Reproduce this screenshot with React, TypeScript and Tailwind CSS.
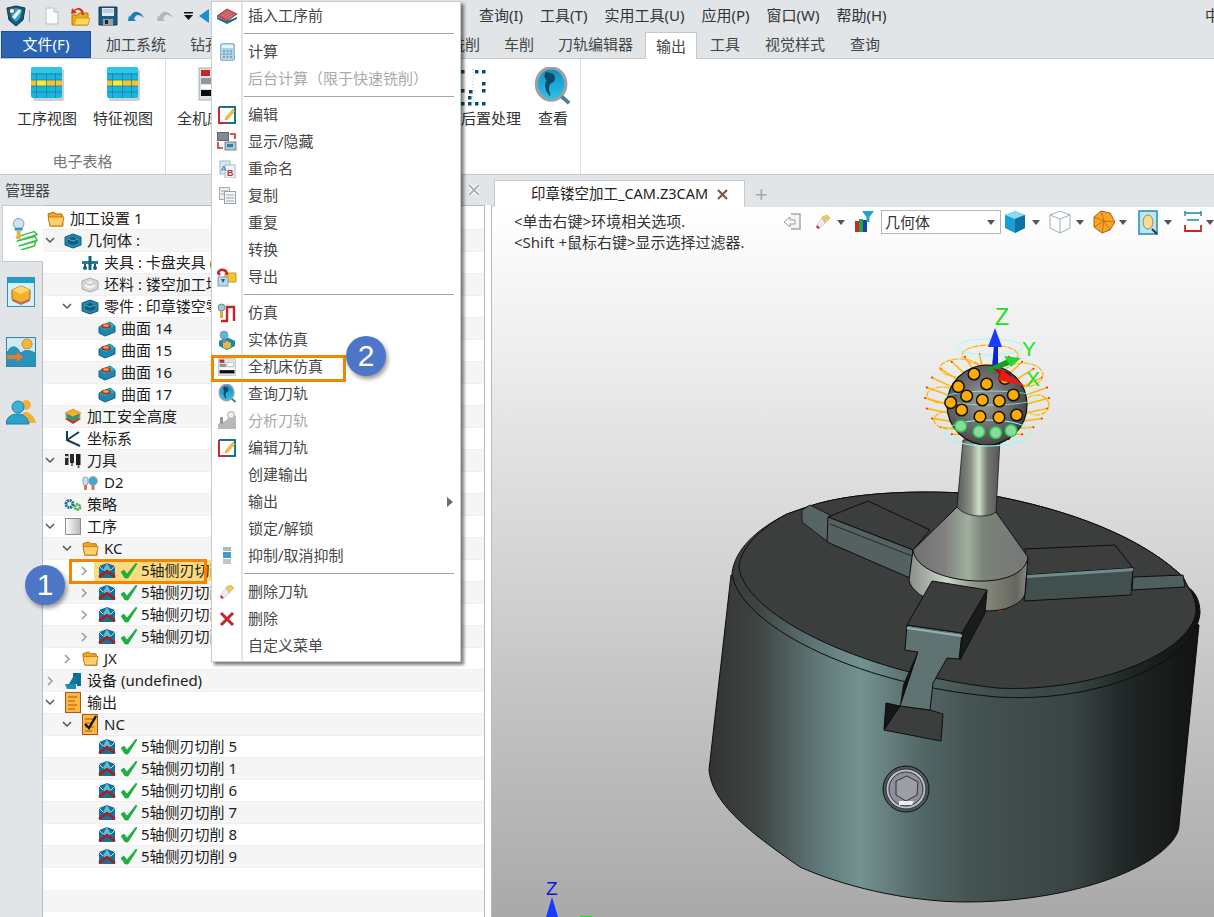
import React from 'react'

type IconProps = { className?: string }

const Logo = () => (
  <svg width="20" height="22" viewBox="0 0 20 22">
    <path d="M1 3 L10 1 L19 3 L17 15 L10 21 L3 15 Z" fill="#0d5f7d" stroke="#16313f" />
    <path d="M4 5 L10 3 L16 5 L14 13 L10 17 L6 13 Z" fill="#38a6c7" />
    <path d="M6 12 L13 4 L15 6 L9 14 Z" fill="#f4f6f7" />
    <circle cx="6" cy="6" r="2.5" fill="#fff" stroke="#555" />
  </svg>
)
const NewDoc = () => (
  <svg width="16" height="18" viewBox="0 0 16 18">
    <path d="M2 1 H10 L14 5 V17 H2 Z" fill="#fbfbfb" stroke="#b9bec2" />
    <path d="M10 1 V5 H14" fill="#e3e6e8" stroke="#b9bec2" />
  </svg>
)
const OpenFolder = () => (
  <svg width="20" height="20" viewBox="0 0 20 20">
    <path d="M2 9 H8 L9 7 H18 V19 H2 Z" fill="#f0a90e" stroke="#bb7a05" />
    <path d="M4 19 L6 12 H20 L18 19 Z" fill="#ffd75a" stroke="#d59c10" />
    <path d="M12 9 C11 3 7 3 5 5 L7 7 L1 8 L2 2 L4 4 C8 0 14 2 14 9 Z" fill="#dd2e1c" />
  </svg>
)
const Save = () => (
  <svg width="20" height="20" viewBox="0 0 20 20">
    <path d="M1 1 H19 V19 H1 Z" fill="#1d5c83" stroke="#12384f" />
    <rect x="4" y="2" width="12" height="8" fill="#dfe9ef" />
    <path d="M5 4 H15 M5 6 H15" stroke="#8fb0c4" />
    <rect x="5" y="13" width="10" height="6" fill="#9a9fa3" />
    <rect x="7" y="14" width="3" height="4" fill="#222" />
  </svg>
)
const Undo = ({ c }: { c: string }) => (
  <svg width="18" height="12" viewBox="0 0 18 12">
    <path d="M3 7 C6 0 13 0 17 8 C12 4 9 4 7 9 L9 11 L1 11 L2 5 Z" fill={c} />
  </svg>
)
const Caret = ({ className = '' }: IconProps) => (
  <svg width="8" height="5" viewBox="0 0 8 5" className={className}><path d="M0 0 H8 L4 5 Z" fill="#555" /></svg>
)
const TableView = () => (
  <svg width="33" height="34" viewBox="0 0 33 34">
    <rect x="2" y="2" width="31" height="32" rx="2" fill="#c9d0d3" />
    <rect x="0" y="0" width="31" height="31" rx="2" fill="#1cb4dc" />
    <rect x="0" y="0" width="31" height="6" rx="2" fill="#2ec8e6" />
    <rect x="0" y="13" width="31" height="6" fill="#fbc12e" />
    <rect x="6" y="13" width="10" height="6" fill="#ffe62f" />
    <path d="M0 7 H31 M0 13 H31 M0 19 H31 M0 25 H31 M5.5 6 V31 M15.5 6 V31 M24.5 6 V31" stroke="#1287ad" strokeWidth="0.8" />
  </svg>
)
const Machine = ({ size = 34 }: { size?: number }) => (
  <svg width={size} height={size} viewBox="0 0 34 34">
    <rect x="1" y="1" width="32" height="32" fill="#dfe3e6" stroke="#a9aeb2" />
    <rect x="3" y="3" width="9" height="6" fill="#c9252b" />
    <rect x="3" y="11" width="12" height="6" fill="#8d99a1" />
    <rect x="17" y="9" width="12" height="7" fill="#fff" stroke="#9aa4aa" />
    <rect x="3" y="23" width="28" height="6" fill="#0b0b0b" />
    <rect x="3" y="18" width="28" height="4" fill="#fff" />
  </svg>
)
const PostDots = () => (
  <svg width="32" height="40" viewBox="0 0 32 40">
    <path d="M16 2 V38" stroke="#a6c4d4" strokeDasharray="1 2" />
    {[[4, 3], [18, 3], [25, 3], [25, 15], [4, 22], [12, 23], [25, 22], [11, 29], [4, 35], [11, 35], [18, 35], [25, 35]].map(([x, y], i) => (
      <rect key={i} x={x} y={y} width="3.5" height="3.5" fill="#0d4a6b" />
    ))}
  </svg>
)
const Lens = ({ size = 38, grey = false }: { size?: number; grey?: boolean }) => (
  <svg width={size} height={size} viewBox="0 0 38 40">
    <defs>
      <linearGradient id="lensblue" x1="0" y1="0" x2="0" y2="1"><stop offset="0" stopColor="#0f8dbd" /><stop offset="1" stopColor="#2ac4ec" /></linearGradient>
    </defs>
    <ellipse cx="17" cy="18" rx="15.5" ry="17" fill={grey ? '#bbb' : 'url(#lensblue)'} stroke="#9aa1a6" strokeWidth="3.4" />
    <path d="M12 5 C18 6 22 8 21 13 C20 18 16 15 15 21 C14 26 17 27 16 31 C12 27 9 20 12 14 C9 10 10 7 12 5 Z" fill="#0c4a6b" />
    <path d="M28 31 L36 38" stroke="#4b7f99" strokeWidth="4" />
  </svg>
)
const FolderOpen = ({ s = 17 }: { s?: number }) => (
  <svg width={s} height={s} viewBox="0 0 18 18">
    <path d="M1 4 L7 2 L9 4 L15 4 L16 16 H3 Z" fill="#f2a71c" stroke="#b8690b" />
    <path d="M1 7 H17 L15 16 H3 Z" fill="#ffcf6d" stroke="#c47d12" />
  </svg>
)
const SolidBox = ({ grey = false }: { grey?: boolean }) => (
  <svg width="18" height="16" viewBox="0 0 18 16">
    <path d="M9 1 L17 4 V12 L9 15 L1 12 V4 Z" fill={grey ? '#d6d6d6' : '#1f86ad'} stroke={grey ? '#adadad' : '#125f80'} />
    <path d="M9 4 L14 6 V10 L9 12 L4 10 V6 Z" fill={grey ? '#f0f0f0' : '#0e5a7b'} />
    <path d="M4 6 L9 8 L14 6" fill="none" stroke={grey ? '#b0b0b0' : '#4cb8d8'} />
  </svg>
)
const Fixture = () => (
  <svg width="18" height="16" viewBox="0 0 18 16">
    <path d="M1 6 H17 V9 H1 Z" fill="#1c7ea5" />
    <rect x="7.5" y="1" width="3" height="14" fill="#125f80" />
    <circle cx="4" cy="13" r="2" fill="#125f80" /><circle cx="14" cy="13" r="2" fill="#125f80" />
    <path d="M4 9 V12 M14 9 V12" stroke="#125f80" strokeWidth="2" />
  </svg>
)
const Surface = () => (
  <svg width="18" height="16" viewBox="0 0 18 16">
    <path d="M1 6 L12 1 L17 5 V11 L7 15 L1 12 Z" fill="#1c88b2" stroke="#116283" />
    <path d="M1 6 L7 9 L17 5 L12 1 Z" fill="#28aacb" />
    <ellipse cx="8" cy="5" rx="5" ry="2.5" fill="#b03520" />
    <ellipse cx="8" cy="4.5" rx="3" ry="1.2" fill="#e6b25a" />
  </svg>
)
const Layers = () => (
  <svg width="18" height="17" viewBox="0 0 18 17">
    <path d="M9 7 L17 11 L9 16 L1 11 Z" fill="#c9352a" />
    <path d="M9 5 L17 9 L9 13 L1 9 Z" fill="#33a853" />
    <path d="M9 3 L17 7 L9 11 L1 7 Z" fill="#1f86ad" />
    <path d="M9 1 L17 5 L9 9 L1 5 Z" fill="#f1b025" stroke="#a66f10" strokeWidth="0.5" />
  </svg>
)
const Axes = () => (
  <svg width="16" height="16" viewBox="0 0 16 16"><path d="M2 0 V9 L15 15 M2 9 L14 1" fill="none" stroke="#123f5a" strokeWidth="2" /></svg>
)
const Tools = () => (
  <svg width="18" height="16" viewBox="0 0 18 16">
    <rect x="1" y="1" width="3.5" height="11" fill="#2b2b2b" /><rect x="1" y="3" width="3.5" height="2" fill="#d2d2d2" />
    <rect x="6" y="1" width="4" height="9" fill="#2b2b2b" /><rect x="7" y="10" width="2" height="3" fill="#777" />
    <rect x="12" y="1" width="4.5" height="11" fill="#1d1d1d" /><rect x="13.5" y="12" width="2" height="3" fill="#666" />
  </svg>
)
const ToolD = () => (
  <svg width="16" height="16" viewBox="0 0 16 16">
    <rect x="1" y="2" width="5" height="8" rx="2" fill="#d6dde2" stroke="#93a0a8" /><rect x="2" y="10" width="3" height="5" fill="#d07a52" />
    <circle cx="11" cy="6" r="4.5" fill="#43a9d1" stroke="#9fb2bc" /><rect x="9.5" y="10" width="3" height="5" fill="#d07a52" />
  </svg>
)
const Gears = () => (
  <svg width="18" height="14" viewBox="0 0 18 14">
    <circle cx="5.5" cy="6" r="3.5" fill="none" stroke="#1c6f92" strokeWidth="3" strokeDasharray="2 0.7" />
    <circle cx="13.5" cy="9" r="2.6" fill="none" stroke="#47ad45" strokeWidth="2.6" strokeDasharray="2 0.6" />
  </svg>
)
const ProcessBox = () => (
  <svg width="16" height="17" viewBox="0 0 16 17">
    <defs><linearGradient id="pb"><stop offset="0" stopColor="#fff" /><stop offset="1" stopColor="#b8b8b8" /></linearGradient></defs>
    <rect x="0.5" y="0.5" width="15" height="16" fill="url(#pb)" stroke="#8f8f8f" />
  </svg>
)
const PathIcon = () => (
  <svg width="18" height="17" viewBox="0 0 18 17">
    <path d="M1 4 L9 1 L17 4 V16 H1 Z" fill="#1a6f96" />
    <path d="M9 1 L13 8 L9 11 L5 8 Z" fill="#5fbcd8" />
    <path d="M1 4 L5 8 M17 4 L13 8" stroke="#bde4f0" />
    <path d="M1 15 L9 9 L17 15" fill="none" stroke="#a8201c" strokeWidth="2.6" />
  </svg>
)
const Check = () => (
  <svg width="18" height="17" viewBox="0 0 18 17"><path d="M1 10 L4 8 L7 12 L16 1 L17 2 L8 16 H5 Z" fill="#18b53c" stroke="#0e8a2b" strokeWidth="0.5" /></svg>
)
const Equip = () => (
  <svg width="18" height="18" viewBox="0 0 18 18">
    <path d="M9 1 H17 V14 H13 V5 H9 Z" fill="#0f6d92" />
    <path d="M1 12 H12 V17 H3 Z" fill="#1c8db6" /><path d="M5 12 L9 5 H13 V12 Z" fill="#13779d" />
  </svg>
)
const OutDoc = ({ tick = false }: { tick?: boolean }) => (
  <svg width="16" height="21" viewBox="0 0 16 21">
    <rect x="0.5" y="0.5" width="15" height="20" fill="#fbb93a" stroke="#b2502a" />
    <path d="M3 5 H12 M3 9 H10 M3 13 H12 M3 17 H10" stroke="#b2502a" />
    {tick && <path d="M3 10 L7 14 L14 2" fill="none" stroke="#111" strokeWidth="2.4" />}
  </svg>
)
const PadIcon = () => (
  <svg width="22" height="16" viewBox="0 0 22 16">
    <path d="M1 9 L11 13 L21 9 V11 L11 16 L1 11 Z" fill="#14739b" />
    <path d="M1 8 L11 1 L21 6 L11 13 Z" fill="#c55a5f" stroke="#a73b42" />
    <path d="M6 8 L12 4 M9 9 L15 5 M12 10 L17 7" stroke="#eab0ae" strokeDasharray="1 1" />
  </svg>
)
const Calc = () => (
  <svg width="15" height="18" viewBox="0 0 15 18">
    <rect x="0.5" y="0.5" width="14" height="17" rx="1.5" fill="#a9d4ea" stroke="#8fb7cc" />
    <rect x="2" y="2" width="11" height="3" fill="#e9f3f7" />
    <path d="M3 8 H12 M3 11 H12 M3 14 H12" stroke="#8096a5" strokeWidth="1.4" strokeDasharray="2 1.5" />
  </svg>
)
const EditI = () => (
  <svg width="18" height="18" viewBox="0 0 18 18">
    <path d="M1 1 H17 V17 H1 Z" fill="#fff" />
    <path d="M1 1 V17 H9" fill="none" stroke="#c9292f" strokeWidth="2" />
    <path d="M1 1 H17 V17 H9" fill="none" stroke="#16728f" strokeWidth="2" />
    <path d="M7 14 L8 11 L15 3 L17 5 L10 13 Z" fill="#f3c33d" stroke="#b98b19" strokeWidth="0.5" />
  </svg>
)
const ShowHide = () => (
  <svg width="20" height="19" viewBox="0 0 20 19">
    <rect x="0.5" y="0.5" width="11" height="8" fill="#7f8b93" stroke="#5e676c" /><rect x="8" y="10" width="11" height="8" fill="#b9c2c8" stroke="#7c868c" />
    <rect x="10" y="12" width="6" height="3" fill="#1b87ad" />
    <path d="M13 2 H18 V7 M1 10 V16 H6" fill="none" stroke="#d1262c" strokeWidth="1.6" />
  </svg>
)
const Rename = () => (
  <svg width="17" height="18" viewBox="0 0 17 18">
    <rect x="1" y="1" width="10" height="13" fill="#d5e8f3" stroke="#9fbccc" /><rect x="6" y="5" width="10" height="13" fill="#eef3f6" stroke="#a9bac4" />
    <text x="2" y="11" fontSize="8" fill="#1f6fa8" fontFamily="Liberation Sans">A</text>
    <text x="8" y="16" fontSize="9" fontWeight="bold" fill="#c9292f" fontFamily="Liberation Sans">B</text>
  </svg>
)
const Copy = () => (
  <svg width="17" height="17" viewBox="0 0 17 17">
    <rect x="0.5" y="0.5" width="10" height="12" fill="#eee" stroke="#a8a8a8" /><rect x="5.5" y="4.5" width="11" height="12" fill="#f4f7f8" stroke="#8fa5b0" />
    <path d="M2 4 H9 M2 7 H5 M7 8 H15 M7 11 H15 M7 14 H15" stroke="#a3a3a3" />
  </svg>
)
const ExportI = () => (
  <svg width="20" height="20" viewBox="0 0 20 20">
    <path d="M8 6 H19 V15 H8 Z" fill="#f6c52c" stroke="#c49a18" /><rect x="1" y="10" width="10" height="9" fill="#bcd8e8" stroke="#7a9fb4" />
    <path d="M4 12 H8 L6 16 Z" fill="#1b5f87" />
    <path d="M10 8 C10 2 3 1 1 6 L3 8" fill="none" stroke="#d1262c" strokeWidth="2.6" />
  </svg>
)
const SimI = () => (
  <svg width="20" height="20" viewBox="0 0 20 20">
    <circle cx="4.5" cy="4.5" r="3.5" fill="#9cc7d9" stroke="#6e8e9c" /><rect x="3" y="8" width="3" height="7" fill="#e0a63c" />
    <path d="M4 18 H10 V4 H17 V18" fill="none" stroke="#c7242a" strokeWidth="2.4" />
  </svg>
)
const SolidSim = () => (
  <svg width="20" height="20" viewBox="0 0 20 20">
    <path d="M2 11 L10 7 L18 11 V16 L10 20 L2 16 Z" fill="#1c88b2" /><path d="M6 13 L10 11 L14 13 V17 L10 19 L6 17 Z" fill="#f2b637" />
    <circle cx="7" cy="5" r="4" fill="#59b7dc" stroke="#7fa3b3" /><rect x="5.5" y="8" width="3" height="5" fill="#7d8e96" />
  </svg>
)
const AnalyzeI = () => (
  <svg width="20" height="19" viewBox="0 0 20 19">
    <path d="M1 18 V13 L8 10 L14 5 H19 V18 Z" fill="#b9b9b9" /><circle cx="14" cy="4" r="3.5" fill="#eee" stroke="#aaa" /><rect x="3" y="6" width="3" height="7" fill="#999" />
  </svg>
)
const Suppress = () => (
  <svg width="10" height="18" viewBox="0 0 10 18">
    <rect x="1" y="0" width="8" height="4" fill="#aeb9bf" /><rect x="1" y="5" width="8" height="6" fill="#3e9ec6" /><rect x="1" y="12" width="8" height="5" fill="#bcc5ca" />
  </svg>
)
const Eraser = () => (
  <svg width="16" height="16" viewBox="0 0 16 16">
    <path d="M7 3 L12 1 L15 4 L9 10 Z" fill="#eecb57" stroke="#b0a16b" strokeWidth="0.5" /><path d="M2 11 L7 4 L10 9 L5 14 Z" fill="#eee" stroke="#aaa" strokeWidth="0.5" /><path d="M2 11 L5 14 L3 15 L1 13 Z" fill="#c9343a" />
  </svg>
)
const RedX = () => (
  <svg width="16" height="16" viewBox="0 0 16 16"><path d="M2 2 L14 14 M14 2 L2 14" stroke="#c1272d" strokeWidth="3" /></svg>
)

const DrillRail = () => (
  <svg width="31" height="33" viewBox="0 0 32 34">
    <path d="M9 21 L28 15 L31 18 L10 25 L29 20 L31 24 L12 30 L30 25 L28 30 L14 34" fill="none" stroke="#3fc04a" strokeWidth="1.6" />
    <circle cx="12" cy="7" r="5.5" fill="#cfe3ea" stroke="#7e99a5" />
    <rect x="8" y="11" width="8" height="3" fill="#2b9ac4" /><rect x="10" y="14" width="4" height="9" fill="#e3b04a" />
  </svg>
)
const CubeRail = () => (
  <svg width="28" height="30" viewBox="0 0 28 30">
    <rect x="0.5" y="0.5" width="27" height="29" fill="#d7f0f8" stroke="#3a8fae" /><rect x="1" y="1" width="26" height="5" fill="#1f9fc8" />
    <path d="M14 9 L23 13 V22 L14 26 L5 22 V13 Z" fill="#f3b02a" stroke="#a76b13" /><path d="M5 13 L14 17 L23 13 L14 9 Z" fill="#ffd964" /><path d="M5 22 L14 26 L23 22 V24 L14 28 L5 24 Z" fill="#c2666a" />
  </svg>
)
const PictureRail = () => (
  <svg width="30" height="30" viewBox="0 0 30 30">
    <rect x="0.5" y="0.5" width="29" height="29" fill="#cfe8f2" stroke="#2f86a8" />
    <circle cx="21" cy="7" r="5" fill="#f5b73d" stroke="#c98a1b" />
    <path d="M1 14 C6 6 11 8 15 15 C19 11 24 12 29 15 V29 H1 Z" fill="#2a93ba" /><path d="M1 14 C6 6 11 8 15 15 C19 11 24 12 29 15" fill="none" stroke="#e4f3f8" />
    <path d="M1 18 H11 V15 L17 20 L11 25 V22 H1 Z" fill="#ec7a2c" />
  </svg>
)
const UsersRail = () => (
  <svg width="30" height="26" viewBox="0 0 30 26">
    <circle cx="20" cy="6" r="5" fill="#f0b13a" /><path d="M13 24 C13 15 18 13 20 13 C24 13 29 18 30 24 Z" fill="#f0b13a" />
    <circle cx="12" cy="8" r="6" fill="#3ab2d8" stroke="#1b7fa6" /><path d="M0 25 C1 17 6 15 12 15 C18 15 22 19 23 25 Z" fill="#2aa3cc" stroke="#1b7fa6" />
  </svg>
)

const Scene = () => {
  const dots: [number, number, string][] = [
    [222, 252, 'o'], [260, 282, 'o'], [315, 265, 'o'], [175, 290, 'o'], [200, 318, 'o'], [247, 330, 'o'], [298, 333, 'o'], [340, 315, 'o'],
    [152, 338, 'o'], [185, 360, 'o'], [240, 380, 'o'], [297, 382, 'o'], [350, 375, 'o'], [182, 408, 'g'], [237, 425, 'g'], [287, 428, 'g'], [333, 422, 'g'],
  ]
  const spokes = Array.from({ length: 26 }, (_, i) => (i * Math.PI * 2) / 26)
  return (
    <svg className="absolute inset-0" width="722" height="710" viewBox="492 207 722 710">
      <defs>
        <linearGradient id="body" gradientUnits="userSpaceOnUse" x1="709" y1="0" x2="1199" y2="0">
          <stop offset="0" stopColor="#333" /><stop offset="0.1" stopColor="#3d4543" /><stop offset="0.22" stopColor="#5f7776" /><stop offset="0.31" stopColor="#739291" />
          <stop offset="0.44" stopColor="#516564" /><stop offset="0.55" stopColor="#435150" /><stop offset="0.74" stopColor="#394544" /><stop offset="0.86" stopColor="#1f2625" /><stop offset="1" stopColor="#121212" />
        </linearGradient>
        <linearGradient id="cone" gradientUnits="userSpaceOnUse" x1="909" y1="0" x2="1028" y2="0">
          <stop offset="0" stopColor="#6f6f6f" /><stop offset="0.3" stopColor="#808080" /><stop offset="0.5" stopColor="#a0af9e" /><stop offset="0.62" stopColor="#7a8478" /><stop offset="1" stopColor="#767676" />
        </linearGradient>
        <linearGradient id="cyl" gradientUnits="userSpaceOnUse" x1="909" y1="0" x2="1028" y2="0">
          <stop offset="0" stopColor="#8c8c8c" /><stop offset="0.32" stopColor="#c8d8c4" /><stop offset="0.55" stopColor="#8e9686" /><stop offset="0.9" stopColor="#66665e" /><stop offset="1" stopColor="#888" />
        </linearGradient>
        <linearGradient id="shaft" gradientUnits="userSpaceOnUse" x1="958" y1="0" x2="1000" y2="0">
          <stop offset="0" stopColor="#5d5d5d" /><stop offset="0.3" stopColor="#8b8f85" /><stop offset="0.5" stopColor="#cfdecb" /><stop offset="0.7" stopColor="#73786d" /><stop offset="1" stopColor="#555" />
        </linearGradient>
        <radialGradient id="ball" cx="0.45" cy="0.45" r="0.6">
          <stop offset="0" stopColor="#9a9e9a" /><stop offset="0.7" stopColor="#5e5e5e" /><stop offset="1" stopColor="#3c3c3c" />
        </radialGradient>
      </defs>

      {/* chuck body */}
      <path d="M731,575 L709,770 C712,800 740,826 800,867 C840,885 905,902 967,902 C1040,902 1110,885 1150,860 C1168,848 1179,836 1179,825 L1199,625 L1100,600 Z" fill="url(#body)" stroke="#0d0d0d" />
      <path d="M732,573 C737,622 850,684 997,697 C1095,703 1195,665 1200,613 C1200,600 1195,592 1188,587 L1183,577 C1150,545 1090,515 1000,497 C960,490 860,488 807,507 L787,514 C755,530 735,550 732,573 Z" fill="url(#body)" stroke="#0d0d0d" />
      <path d="M739,566 C742,612 855,672 997,688 C1090,693 1190,655 1196,612 C1196,600 1192,592 1188,587 L1183,577 C1150,545 1090,515 1000,497 C960,490 860,488 807,507 L787,514 C760,528 741,548 739,566 Z" fill="#3c3e3d" stroke="#0d0d0d" />
      {/* back slot and jaw */}
      <path d="M802,510 L810,505 L830,515 L828,542 L802,522 Z" fill="#566564" stroke="#0d0d0d" strokeWidth="0.8" />
      <path d="M828,517 L868,501 L930,530 L913,550 Z" fill="#3c3e3d" stroke="#0d0d0d" />
      <path d="M828,517 L913,550 L910,578 L827,542 Z" fill="#536261" stroke="#0d0d0d" />
      <path d="M830,524 L912,556" stroke="#0d0d0d" strokeWidth="0.7" />
      {/* right jaw */}
      <path d="M1133,577 L1183,575 L1185,587 L1132,590 Z" fill="#4f5e5e" stroke="#0d0d0d" />
      <path d="M1025,549 L1115,545 L1133,568 L1027,575 Z" fill="#3c3e3d" stroke="#0d0d0d" />
      <path d="M1027,575 L1133,568 L1131,595 L1024,601 Z" fill="#424f4f" stroke="#0d0d0d" />
      <path d="M1027,575 L1133,568 L1133,571 L1027,578 Z" fill="#6f8c8b" />
      {/* cone and collar */}
      <path d="M909,578 C909,610 1020,625 1025,593 L1000,612 Z" fill="#b4301f" />
      <path d="M913,550 L909,580 C912,600 960,615 1000,610 C1015,607 1024,600 1025,593 L1028,557 Z" fill="url(#cyl)" stroke="#0d0d0d" />
      <path d="M913,550 L957,507 L996,512 L1028,557 C1026,575 1000,582 977,581 C945,580 915,568 913,550 Z" fill="url(#cone)" stroke="#0d0d0d" />
      <path d="M963,440 L957,507 C965,518 990,518 996,512 L1000,440 Z" fill="url(#shaft)" stroke="#0d0d0d" strokeWidth="0.7" />
      {/* front jaw */}
      <path d="M884,730 L900,706 L930,710 L943,714 L941,741 Z" fill="#3c3e3d" stroke="#0d0d0d" />
      <path d="M886,703 L900,706 L884,729 Z" fill="#161817" stroke="#0d0d0d" />
      <path d="M917,653 L903,685 L900,705 L918,665 Z" fill="#111" />
      <path d="M987,590 L985,613 L960,660 L962,633 Z" fill="#191c1b" stroke="#0d0d0d" />
      <path d="M907,625 L962,633 L959,659 L947,658 L933,683 L930,710 L900,706 L918,652 L905,650 Z" fill="#5f7373" stroke="#0d0d0d" />
      <path d="M907,628 L962,636" stroke="#93b3b3" strokeWidth="2" />
      <path d="M932,581 L987,590 L962,633 L907,625 Z" fill="#3c3e3d" stroke="#0d0d0d" />
      {/* screw */}
      <circle cx="906" cy="789" r="23" fill="#4a5a58" stroke="#111" />
      <circle cx="906" cy="789" r="20" fill="#b9bdcc" stroke="#333" />
      <circle cx="906" cy="789" r="17" fill="#8d8f9d" stroke="#333" />
      <path d="M896,781 L907,776 L918,782 L917,795 L906,801 L896,795 Z" fill="#9d9da4" stroke="#333" />
      <path d="M899,801 L914,801 L912,805 L899,805 Z" fill="#e8ecf5" />

      {/* ball end and toolpath */}
      {spokes.map((a, i) => (
        <g key={i}>
          <line x1={987 + 36 * Math.cos(a)} y1={405 + 36 * Math.sin(a)} x2={987 + 62 * Math.cos(a)} y2={398 + 44 * Math.sin(a)} stroke="#ffb400" strokeWidth="1.4" />
          <circle cx={987 + 62 * Math.cos(a)} cy={398 + 44 * Math.sin(a)} r="1" fill="#e21" />
        </g>
      ))}
      {[[990, 355, 28, 10], [960, 368, 20, 9], [1023, 375, 20, 12], [942, 395, 15, 8], [1037, 405, 12, 10], [950, 420, 16, 9]].map(([cx, cy, rx, ry], i) => (
        <ellipse key={i} cx={cx} cy={cy} rx={rx} ry={ry} fill="none" stroke="#ffb400" strokeWidth="1.2" strokeDasharray="6 1" />
      ))}
      <ellipse cx="990" cy="347" rx="33" ry="8" fill="none" stroke="#8ff" strokeWidth="0.8" />
      <circle cx="987" cy="405" r="40" fill="url(#ball)" stroke="#111" strokeWidth="1.2" />
      <ellipse cx="988" cy="433" rx="43" ry="13" fill="none" stroke="#8ff" strokeWidth="1" />
      <ellipse cx="990" cy="398" rx="46" ry="7" fill="none" stroke="#8ff" strokeWidth="0.7" />
      {dots.map(([x, y, k], i) => (
        <circle key={i} cx={900 + x / 3} cy={290 + y / 3} r="5.8" fill={k === 'o' ? '#ffab00' : '#8fd6a0'} stroke={k === 'o' ? '#111' : '#1ed14b'} strokeWidth="1.5" />
      ))}
      {/* triad */}
      <path d="M992,369 L994,345 L998,345 L998,369 Z" fill="#0a22d8" />
      <path d="M995,328 L988,347 L1002,347 Z" fill="#1a3bff" />
      <path d="M988,368 L1008,359 L1012,364 L990,372 Z" fill="#12a02a" />
      <path d="M1021,358 L1004,356 L1011,367 Z" fill="#27d43a" />
      <path d="M993,368 L1006,372 L1003,378 Z" fill="#c00" />
      <path d="M1025,386 L1002,370 L998,380 Z" fill="#f01a12" />
      <text x="995" y="325" fontSize="23" fill="#1fe01f" fontFamily="Liberation Sans">Z</text>
      <text x="1022" y="356" fontSize="21" fill="#1fe01f" fontFamily="Liberation Sans">Y</text>
      <text x="1026" y="386" fontSize="21" fill="#1fe01f" fontFamily="Liberation Sans">X</text>

      {/* small triad */}
      <text x="546" y="895" fontSize="19" fill="#1010e8" fontFamily="Liberation Sans">Z</text>
      <path d="M552,897 L546,917 H558 Z" fill="#1a3bff" />
      <path d="M580,917 L592,917" stroke="#1fe01f" strokeWidth="2" />
    </svg>
  )
}

type Row = { d: number; open?: boolean; closed?: boolean; icon: React.ReactNode; text: string; check?: boolean; selected?: boolean }

const pathRow = (text: string, extra: Partial<Row> = {}): Row => ({ d: 2, icon: <PathIcon />, text, check: true, ...extra })

const rows: Row[] = [
  { d: -1, icon: <FolderOpen s={18} />, text: '加工设置 1' },
  { d: 0, open: true, icon: <SolidBox />, text: '几何体 :' },
  { d: 1, icon: <Fixture />, text: '夹具 : 卡盘夹具 (' },
  { d: 1, icon: <SolidBox grey />, text: '坯料 : 镂空加工坯' },
  { d: 1, open: true, icon: <SolidBox />, text: '零件 : 印章镂空零' },
  { d: 2, icon: <Surface />, text: '曲面 14' },
  { d: 2, icon: <Surface />, text: '曲面 15' },
  { d: 2, icon: <Surface />, text: '曲面 16' },
  { d: 2, icon: <Surface />, text: '曲面 17' },
  { d: 0, icon: <Layers />, text: '加工安全高度' },
  { d: 0, icon: <Axes />, text: '坐标系' },
  { d: 0, open: true, icon: <Tools />, text: '刀具' },
  { d: 1, icon: <ToolD />, text: 'D2' },
  { d: 0, icon: <Gears />, text: '策略' },
  { d: 0, open: true, icon: <ProcessBox />, text: '工序' },
  { d: 1, open: true, icon: <FolderOpen />, text: 'KC' },
  pathRow('5轴侧刃切削 2', { closed: true, selected: true }),
  pathRow('5轴侧刃切削 3', { closed: true }),
  pathRow('5轴侧刃切削 4', { closed: true }),
  pathRow('5轴侧刃切削 5', { closed: true }),
  { d: 1, closed: true, icon: <FolderOpen />, text: 'JX' },
  { d: 0, closed: true, icon: <Equip />, text: '设备 (undefined)' },
  { d: 0, open: true, icon: <OutDoc />, text: '输出' },
  { d: 1, open: true, icon: <OutDoc tick />, text: 'NC' },
  pathRow('5轴侧刃切削 5'),
  pathRow('5轴侧刃切削 1'),
  pathRow('5轴侧刃切削 6'),
  pathRow('5轴侧刃切削 7'),
  pathRow('5轴侧刃切削 8'),
  pathRow('5轴侧刃切削 9'),
]

const indent: Record<number, string> = { [-1]: 'pl-[5px]', 0: 'pl-0', 1: 'pl-[17px]', 2: 'pl-[34px]' }

const TreeRow = ({ r, i }: { r: Row; i: number }) => (
  <div className={`h-[22px] flex items-center whitespace-nowrap border-b border-[#efefef] text-[15px] text-[#1c1c1c] ${i % 2 ? 'bg-[#f5f5f5]' : 'bg-white'} ${r.selected ? 'bg-[linear-gradient(90deg,white_51px,#fbdb80_51px,#fbdb80_190px,white_190px)]' : ''} ${indent[r.d]}`}>
    {r.d >= 0 && (
      <span className="w-[14px] mr-[8px] flex justify-center shrink-0">
        {r.open && <svg width="10" height="7" viewBox="0 0 10 7"><path d="M1 1 L5 5 L9 1" fill="none" stroke="#555" strokeWidth="1.5" /></svg>}
        {r.closed && <svg width="7" height="10" viewBox="0 0 7 10"><path d="M1 1 L5 5 L1 9" fill="none" stroke="#999" strokeWidth="1.5" /></svg>}
      </span>
    )}
    <span className="w-[16px] mr-[6px] flex justify-center shrink-0 [&>svg]:shrink-0">{r.icon}</span>
    {r.check && <span className="mr-[4px] -ml-[1px] w-[17px] flex justify-center shrink-0 [&>svg]:shrink-0"><Check /></span>}
    <span>{r.text}</span>
  </div>
)

type MenuEntry = { label: string; icon?: React.ReactNode; off?: boolean; arrow?: boolean } | 'sep'

const menu: MenuEntry[] = [
  { label: '插入工序前', icon: <PadIcon /> },
  'sep',
  { label: '计算', icon: <Calc /> },
  { label: '后台计算（限于快速铣削）', off: true },
  'sep',
  { label: '编辑', icon: <EditI /> },
  { label: '显示/隐藏', icon: <ShowHide /> },
  { label: '重命名', icon: <Rename /> },
  { label: '复制', icon: <Copy /> },
  { label: '重复' },
  { label: '转换' },
  { label: '导出', icon: <ExportI /> },
  'sep',
  { label: '仿真', icon: <SimI /> },
  { label: '实体仿真', icon: <SolidSim /> },
  { label: '全机床仿真', icon: <Machine size={18} /> },
  { label: '查询刀轨', icon: <Lens size={19} /> },
  { label: '分析刀轨', icon: <AnalyzeI />, off: true },
  { label: '编辑刀轨', icon: <EditI /> },
  { label: '创建输出' },
  { label: '输出', arrow: true },
  { label: '锁定/解锁' },
  { label: '抑制/取消抑制', icon: <Suppress /> },
  'sep',
  { label: '删除刀轨', icon: <Eraser /> },
  { label: '删除', icon: <RedX /> },
  { label: '自定义菜单' },
]

const ContextMenu = () => (
  <div className="absolute left-[211px] top-px w-[250px] pb-[2px] bg-white border border-[#c9cdd0] shadow-[3px_3px_3px_rgba(0,0,0,0.5)] z-10 text-[15px] bg-[linear-gradient(90deg,white_29px,#e3e6e8_29px,#e3e6e8_31px,white_31px)]">
    {menu.map((m, i) =>
      m === 'sep' ? (
        <div key={i} className="h-[9px] flex items-center pl-[32px] pr-[6px]"><div className="h-[1px] w-full bg-[#a4a7a9]" /></div>
      ) : (
        <div key={i} className="h-[27px] flex items-center">
          <span className="w-[30px] flex justify-center shrink-0">{m.icon}</span>
          <span className={`ml-[6px] ${m.off ? 'text-[#a9a9a9]' : 'text-[#484848]'}`}>{m.label}</span>
          {m.arrow && <svg className="ml-auto mr-[7px]" width="6" height="10" viewBox="0 0 6 10"><path d="M0 0 L6 5 L0 10 Z" fill="#6b6b6b" /></svg>}
        </div>
      ),
    )}
  </div>
)

const Badge = ({ n, className }: { n: string; className: string }) => (
  <div className={`absolute w-[40px] h-[40px] rounded-full bg-[#4d76c6] shadow-[2px_3px_4px_rgba(0,0,0,0.4)] text-white text-[30px] leading-[40px] text-center z-20 font-['Liberation_Sans',sans-serif] ${className}`}>{n}</div>
)

const App = () => (
  <div className="relative w-[1214px] h-[917px] overflow-hidden bg-[#e1e5e8] font-['Noto_Sans','Noto_Sans_CJK_SC',sans-serif] text-[15px] text-[#333]">
    {/* quick access + menu bar */}
    <div className="h-[31px] flex items-center">
      <div className="w-[479px] flex items-center pl-[6px] shrink-0">
        <Logo />
        <div className="w-px h-[12px] bg-[#9aa0a4] ml-[3px] mr-[14px]" />
        <NewDoc />
        <span className="ml-[10px]"><OpenFolder /></span>
        <span className="ml-[8px]"><Save /></span>
        <span className="ml-[9px]"><Undo c="#1e7fb0" /></span>
        <span className="ml-[11px]"><Undo c="#b3b7ba" /></span>
        <svg className="ml-[10px]" width="9" height="8" viewBox="0 0 9 8"><path d="M0 0 H9 V1.5 H0 Z M0 3 H9 L4.5 8 Z" fill="#111" /></svg>
        <svg className="ml-[6px]" width="10" height="14" viewBox="0 0 10 14"><path d="M10 0 V14 L0 7 Z" fill="#1c8fd0" /></svg>
      </div>
      <div className="flex gap-[17px] text-[#333] whitespace-nowrap">
        {['查询(I)', '工具(T)', '实用工具(U)', '应用(P)', '窗口(W)', '帮助(H)'].map((t) => <span key={t}>{t}</span>)}
      </div>
      <span className="ml-auto -mr-[6px] text-[#333]">中</span>
    </div>

    {/* ribbon tabs */}
    <div className="h-[27px] flex items-stretch whitespace-nowrap text-[#444]">
      <div className="ml-px w-[90px] flex items-center justify-center bg-[#2c64b4] border border-[#1c4f9c] text-white">文件(F)</div>
      <div className="ml-[3px] px-[12px] flex items-center">加工系统</div>
      <div className="px-[12px] flex items-center">钻孔</div>
      <div className="ml-[206px] px-[12px] flex items-center">铣削</div>
      <div className="px-[12px] flex items-center">车削</div>
      <div className="px-[12px] flex items-center">刀轨编辑器</div>
      <div className="w-[52px] flex items-center justify-center bg-white border border-b-0 border-[#c3c7ca] relative top-px">输出</div>
      <div className="px-[13px] flex items-center">工具</div>
      <div className="px-[12px] flex items-center">视觉样式</div>
      <div className="px-[13px] flex items-center">查询</div>
    </div>

    {/* ribbon */}
    <div className="h-[117px] flex bg-white border-t border-b border-[#c6cacd] whitespace-nowrap">
      <div className="w-[166px] flex flex-col border-r border-[#dcdfe1] shrink-0">
        <div className="flex pl-[9px]">
          <div className="w-[76px] flex flex-col items-center pt-[8px]">
            <div className="h-[38px]"><TableView /></div>
            <span className="mt-[3px] leading-[20px]">工序视图</span>
          </div>
          <div className="w-[76px] flex flex-col items-center pt-[8px]">
            <div className="h-[38px]"><TableView /></div>
            <span className="mt-[3px] leading-[20px]">特征视图</span>
          </div>
        </div>
        <div className="mt-auto h-[26px] leading-[26px] text-center text-[#777]">电子表格</div>
      </div>
      <div className="w-[415px] flex border-r border-[#dcdfe1] shrink-0">
        <div className="ml-[11px] w-[70px] flex flex-col items-start pt-[8px]">
          <div className="h-[38px] ml-[21px]"><Machine /></div>
          <span className="mt-[3px] leading-[20px] w-[35px] overflow-hidden">全机床仿真</span>
        </div>
        <div className="ml-[203px] w-[71px] flex flex-col items-start pt-[8px]">
          <div className="h-[38px] ml-[7px]"><PostDots /></div>
          <span className="mt-[3px] leading-[20px]">D后置处理</span>
        </div>
        <div className="ml-[12px] w-[40px] flex flex-col items-center pt-[8px]">
          <div className="h-[38px]"><Lens /></div>
          <span className="mt-[3px] leading-[20px]">查看</span>
        </div>
      </div>
    </div>

    {/* work area */}
    <div className="h-[742px] flex">
      <div className="w-[492px] flex flex-col shrink-0">
        <div className="h-[30px] flex items-center pl-[5px] pr-[11px] text-[#444]">
          <span>管理器</span>
          <svg className="ml-auto" width="14" height="14" viewBox="0 0 14 14"><path d="M2 2 L12 12 M12 2 L2 12" stroke="#fff" strokeWidth="4" /><path d="M2 2 L12 12 M12 2 L2 12" stroke="#aab0b4" strokeWidth="2" /></svg>
        </div>
        <div className="flex-1 flex min-h-0">
          <div className="w-[43px] flex flex-col items-center shrink-0 border-r border-[#b7bcc0]">
            <div className="self-start w-[41px] ml-[2px] h-[57px] bg-white border border-r-0 border-[#c6cacd] flex items-center pl-[4px] relative [&>svg]:shrink-0"><DrillRail /></div>
            <div className="mt-[15px]"><CubeRail /></div>
            <div className="mt-[30px]"><PictureRail /></div>
            <div className="mt-[32px]"><UsersRail /></div>
          </div>
          <div className="w-[441px] border-t border-[#b7bcc0] bg-white overflow-hidden pt-[2px] shrink-0">
            {rows.map((r, i) => <TreeRow key={i} r={r} i={i} />)}
            <div className="h-[22px] bg-white" />
            <div className="h-[22px] bg-[#f5f5f5]" />
          </div>
          <div className="w-[8px] bg-white border-l border-r border-[#b9bec2]" />
        </div>
      </div>

      <div className="flex-1 flex flex-col">
        <div className="h-[32px] flex items-end shrink-0">
          <div className="ml-[2px] w-[251px] h-[27px] bg-white border border-b-0 border-[#c6cacd] flex items-center pl-[36px] text-[14.5px] text-[#222] whitespace-nowrap">
            <span>印章镂空加工_CAM.Z3CAM</span>
            <svg className="ml-[9px]" width="11" height="11" viewBox="0 0 11 11"><path d="M1 1 L10 10 M10 1 L1 10" stroke="#6d5f3f" strokeWidth="2.2" /></svg>
          </div>
          <span className="ml-[10px] mb-[2px] text-[22px] leading-[24px] text-[#a5aaad]">+</span>
        </div>
        <div className="relative flex-1 bg-[linear-gradient(180deg,#ffffff,#a9a9a9)] overflow-hidden">
          <Scene />
          <div className="relative flex justify-between whitespace-nowrap">
            <div className="pl-[22px] pt-[4px] leading-[21px] text-[#333]">
              <div>&lt;单击右键&gt;环境相关选项.</div>
              <div>&lt;Shift +鼠标右键&gt;显示选择过滤器.</div>
            </div>
            <div className="flex items-center h-[30px]">
              <svg width="20" height="20" viewBox="0 0 20 20"><path d="M8 2 H17 V17 H8" fill="#f4f4f4" stroke="#a8a8a8" strokeWidth="1.5" /><path d="M1 10 L7 5 V8 H12 V12 H7 V15 Z" fill="#fff" stroke="#999" /></svg>
              <span className="ml-[12px]"><Eraser /></span>
              <Caret className="ml-[6px]" />
              <svg className="ml-[9px]" width="20" height="22" viewBox="0 0 20 22">
                <rect x="1" y="10" width="4" height="11" fill="#c9262c" /><rect x="5" y="8" width="4" height="13" fill="#27a045" /><rect x="9" y="9" width="4" height="12" fill="#1d3fae" />
                <path d="M8 0 H20 L15.5 6 V11 H12.5 V6 Z" fill="#1ca6c9" />
              </svg>
              <div className="ml-[7px] w-[120px] h-[24px] bg-white border border-[#b5b5b5] flex items-center pl-[3px] pr-[5px] text-[#333]">
                <span>几何体</span>
                <Caret className="ml-auto" />
              </div>
              <svg className="ml-[3px]" width="22" height="24" viewBox="0 0 22 24"><path d="M11 1 L21 5 V18 L11 23 L1 18 V5 Z" fill="#1b9ed0" /><path d="M1 5 L11 9 L21 5 L11 1 Z" fill="#8edaf2" /><path d="M11 9 V23 L21 18 V5 Z" fill="#0e73a2" /></svg>
              <Caret className="ml-[6px]" />
              <svg className="ml-[9px]" width="22" height="24" viewBox="0 0 22 24"><path d="M11 1 L21 5 V18 L11 23 L1 18 V5 Z M1 5 L11 9 L21 5 M11 9 V23" fill="#fdfdfd" stroke="#9bb1bc" /></svg>
              <Caret className="ml-[5px]" />
              <svg className="ml-[9px]" width="22" height="24" viewBox="0 0 22 24"><path d="M8 1 L17 3 L22 12 L17 20 L9 23 L1 17 L1 7 Z" fill="#f7a623" stroke="#b35d1c" /><path d="M8 1 L11 11 L22 12 M1 7 L11 11 L9 23 M1 17 L11 11 L17 20" fill="none" stroke="#b35d1c" strokeWidth="0.7" /></svg>
              <Caret className="ml-[4px]" />
              <svg className="ml-[11px]" width="20" height="25" viewBox="0 0 20 25"><rect x="1" y="1" width="18" height="23" fill="#bde6f4" stroke="#2a93b8" strokeWidth="1.6" /><ellipse cx="10" cy="12" rx="5" ry="7" fill="#f6dc96" stroke="#a1863c" /><path d="M14 19 L19 24" stroke="#333" strokeWidth="2" /></svg>
              <Caret className="ml-[6px]" />
              <svg className="ml-[12px]" width="18" height="24" viewBox="0 0 18 24"><path d="M1 3 H17 M1 1 V6 M17 1 V6 M3 10 H15" fill="none" stroke="#1c86ab" strokeWidth="1.4" /><path d="M1 15 V21 H17 V15" fill="none" stroke="#c9262c" strokeWidth="1.8" /></svg>
              <Caret className="ml-[4px]" />
            </div>
          </div>
        </div>
      </div>
    </div>

    <ContextMenu />
    {/* callouts */}
    <div className="absolute left-[211px] top-[355px] w-[135px] h-[27px] border-[3px] border-[#f58400] z-10" />
    <div className="absolute left-[69px] top-[559px] w-[138px] h-[25px] border-[3px] border-[#f58400] z-10" />
    <Badge n="1" className="left-[25px] top-[565px]" />
    <Badge n="2" className="left-[346px] top-[336px]" />
  </div>
)

export default App
